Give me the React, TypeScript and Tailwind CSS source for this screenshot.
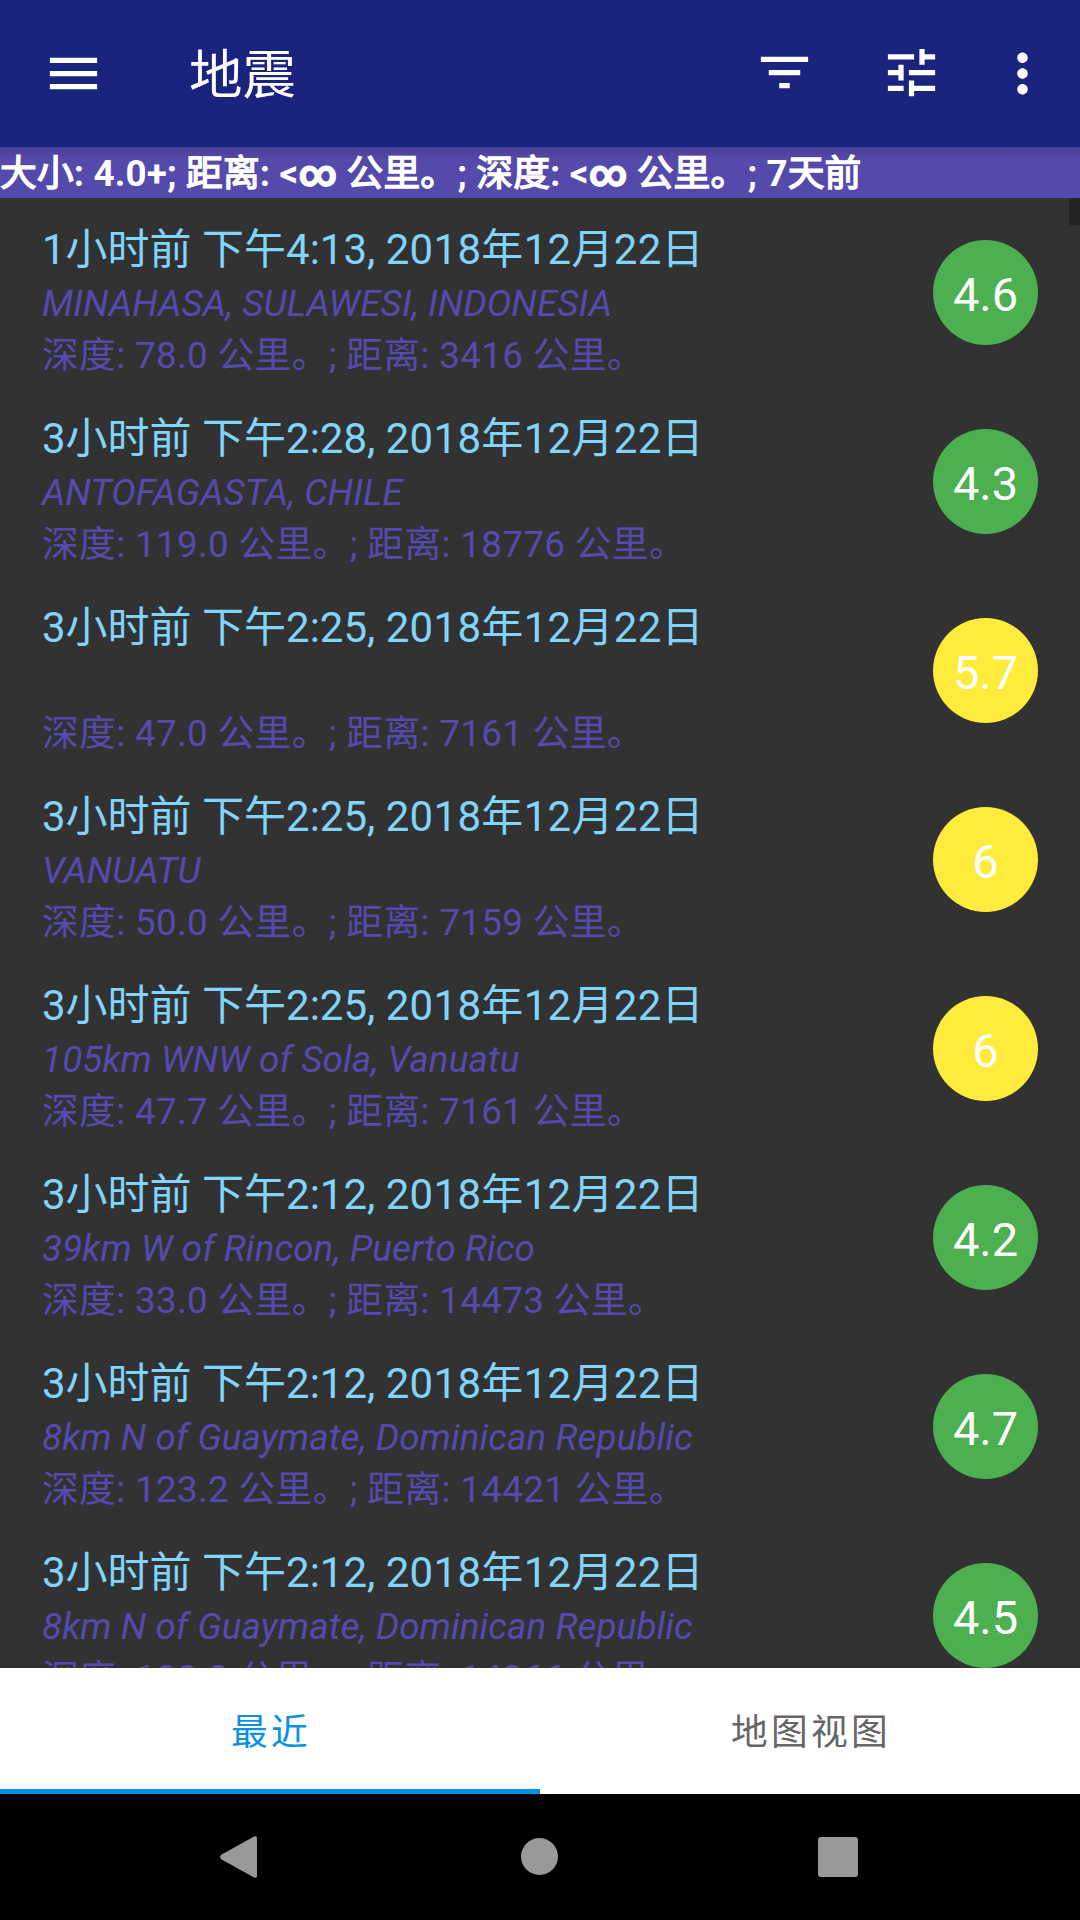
import React from "react";

type Quake = {
  ago: string;
  time: string;
  place: string;
  depth: string;
  distance: string;
  mag: string;
  strong?: boolean;
};

const quakes: Quake[] = [
  { ago: "1小时前", time: "下午4:13", place: "MINAHASA, SULAWESI, INDONESIA", depth: "78.0", distance: "3416", mag: "4.6" },
  { ago: "3小时前", time: "下午2:28", place: "ANTOFAGASTA, CHILE", depth: "119.0", distance: "18776", mag: "4.3" },
  { ago: "3小时前", time: "下午2:25", place: "", depth: "47.0", distance: "7161", mag: "5.7", strong: true },
  { ago: "3小时前", time: "下午2:25", place: "VANUATU", depth: "50.0", distance: "7159", mag: "6", strong: true },
  { ago: "3小时前", time: "下午2:25", place: "105km WNW of Sola, Vanuatu", depth: "47.7", distance: "7161", mag: "6", strong: true },
  { ago: "3小时前", time: "下午2:12", place: "39km W of Rincon, Puerto Rico", depth: "33.0", distance: "14473", mag: "4.2" },
  { ago: "3小时前", time: "下午2:12", place: "8km N of Guaymate, Dominican Republic", depth: "123.2", distance: "14421", mag: "4.7" },
  { ago: "3小时前", time: "下午2:12", place: "8km N of Guaymate, Dominican Republic", depth: "100.0", distance: "14366", mag: "4.5" },
];

function Icon({ d, className }: { d: string; className: string }) {
  return (
    <svg viewBox="0 0 24 24" className={`size-[63px] shrink-0 fill-white ${className}`}>
      <path d={d} />
    </svg>
  );
}

function Toolbar() {
  return (
    <header className="flex h-[147px] shrink-0 items-center bg-[#1a237e] pl-[42px] pr-[26px] text-white">
      <Icon className="" d="M3 18h18v-2H3v2zm0-5h18v-2H3v2zm0-7v2h18V6H3z" />
      <h1 className="ml-[84px] mt-[5px] flex-1 text-[53.5px] leading-[64px]">地震</h1>
      <Icon className="mr-16 mb-[2px]" d="M10 18h4v-2h-4v2zM3 6v2h18V6H3zm3 7h12v-2H6v2z" />
      <Icon
        className="mr-12 mb-[2px]"
        d="M3 17v2h6v-2H3zM3 5v2h10V5H3zm10 16v-2h8v-2h-8v-2h-2v6h2zM7 9v2H3v2h4v2h2V9H7zm14 4v-2H11v2h10zm-6-4h2V7h4V5h-4V3h-2v6z"
      />
      <Icon
        className=""
        d="M12 8c1.1 0 2-.9 2-2s-.9-2-2-2-2 .9-2 2 .9 2 2 2zm0 2c-1.1 0-2 .9-2 2s.9 2 2 2 2-.9 2-2-.9-2-2-2zm0 6c-1.1 0-2 .9-2 2s.9 2 2 2 2-.9 2-2-.9-2-2-2z"
      />
    </header>
  );
}

const filterText = "大小: 4.0+; 距离: <∞ 公里。; 深度: <∞ 公里。; 7天前";

function FilterBar() {
  const runs = filterText.match(/∞|[ -~]+|[^ -~∞]+/g) ?? [];
  return (
    <div className="h-[51px] shrink-0 whitespace-pre bg-[#5549ac] bg-linear-to-b from-[#483f94] to-[#5549ac] to-25% text-[36.75px] leading-[54px] tracking-[0.14px] text-white">
      {runs.map((run, i) => {
        if (run === "∞") {
          return <span key={i} className="font-bold [-webkit-text-stroke:1.2px_white]">{run}</span>;
        }
        return /[ -~]/.test(run) ? (
          <span key={i} className="font-bold">{run}</span>
        ) : (
          <span key={i} className="[-webkit-text-stroke:1.4px_white]">{run}</span>
        );
      })}
    </div>
  );
}

function QuakeRow({ q }: { q: Quake }) {
  return (
    <li className="flex h-[189px] shrink-0 items-center justify-between px-[42px]">
      <div className="h-full whitespace-nowrap pt-[26px] text-[36.75px] leading-[52px] text-[#564aae]">
        <div className="h-[54px] text-[42px] text-[#81d4fa]">
          {q.ago} {q.time}, <span className="tracking-[0.3px]">2018年12月22日</span>
        </div>
        <div className="h-[52px] italic tracking-[0.1px]">{q.place}</div>
        <div className="h-[52px] tracking-[0.35px]">
          深度: {q.depth} 公里。; 距离: {q.distance} 公里。
        </div>
      </div>
      <div
        className={`flex size-[105px] items-center justify-center rounded-full text-[47px] leading-none text-white ${
          q.strong ? "bg-[#ffeb3b]" : "bg-[#4caf50]"
        }`}
      >
        <span className="mt-[4px]">{q.mag}</span>
      </div>
    </li>
  );
}

export default function App() {
  return (
    <div
      lang="zh-CN"
      className="flex h-[1920px] w-[1080px] flex-col overflow-hidden bg-[#323232] font-['Roboto','Noto_Sans_CJK_SC',sans-serif]"
    >
      <Toolbar />
      <FilterBar />
      <main className="relative h-[1470px] shrink-0 overflow-hidden">
        <ul className="flex flex-col">
          {quakes.map((q, i) => (
            <QuakeRow key={i} q={q} />
          ))}
        </ul>
        <div className="absolute right-0 top-0 h-[27px] w-[11px] bg-[#242424]" />
      </main>
      <nav className="grid h-[126px] shrink-0 grid-cols-2 bg-white text-center text-[36.75px] leading-[121px] tracking-[3.3px]">
        <div className="h-[126px] border-b-5 border-[#0091ea] pl-[2px] pt-[4px] text-[#0c8fe5]">最近</div>
        <div className="pl-[2px] pt-[4px] text-[#666666]">地图视图</div>
      </nav>
      <footer className="flex h-[126px] shrink-0 items-center bg-black pl-[220px]">
        <svg viewBox="0 0 37 42" className="h-[42px] w-[37px] fill-[#999999]">
          <path d="M1.2 18.8 33.6 .7Q37-1 37 2.5V39.5Q37 43 33.6 41.3L1.2 23.2Q-1 21 1.2 18.8Z" />
        </svg>
        <div className="ml-[264px] -mt-px size-[37px] rounded-full bg-[#999999]" />
        <div className="ml-[260px] size-10 rounded-[3px] bg-[#999999]" />
      </footer>
    </div>
  );
}
